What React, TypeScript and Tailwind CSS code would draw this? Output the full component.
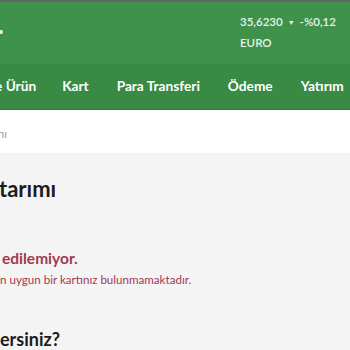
import React from 'react';

const navItems = [
    { label: 'e Ürün', left: 'ml-[-5px]' },
    { label: 'Kart', left: 'ml-[26px]' },
    { label: 'Para Transferi', left: 'ml-[28px]' },
    { label: 'Ödeme', left: 'ml-[28px]' },
    { label: 'Yatırım', left: 'ml-[28px]' },
];

export default function App() {
    return (
        <div className="w-[350px] h-[350px] overflow-hidden bg-[#f4f4f4]" style={{ fontFamily: 'Lato, "Liberation Sans", sans-serif' }}>
            {/* Top header */}
            <div className="h-[2px] bg-[#5f6b62]" />
            <div className="h-[62px] bg-[#3f924c] flex relative">
                <div className="absolute left-0 top-[28px] w-[3px] h-[4px] bg-white/90 rounded-r-sm" />
                <div className="ml-[240px] pt-[10px] text-[11.5px] leading-[20px] text-[#e6f3e6] font-semibold">
                    <div className="flex items-center whitespace-nowrap">
                        <span>35,6230</span>
                        <span className="ml-[5px] text-[7px]">▼</span>
                        <span className="ml-[5px]">-%0,12</span>
                    </div>
                    <div className="mt-[1px]">EURO</div>
                </div>
            </div>

            {/* Nav */}
            <div className="h-[46px] bg-[#388a44] border-b border-[#2f7a3a] flex items-center whitespace-nowrap text-white font-bold text-[13.7px]">
                {navItems.map((item) => (
                    <span key={item.label} className={item.left}>{item.label}</span>
                ))}
            </div>

            {/* Breadcrumb */}
            <div className="h-[43px] bg-white flex items-center pt-[6px] text-[11px] text-[#9a9a9a]">
                <span className="ml-[-2px]">nı</span>
            </div>

            {/* Content */}
            <div className="pt-[22px]">
                <h1 className="text-[22px] leading-[28px] font-bold text-[#1c1c1c] ml-[-1px]">tarımı</h1>
                <div className="mt-[44px] text-[15.5px] leading-[22px] font-bold text-[#a13a52] ml-[2px]">edilemiyor.</div>
                <div className="mt-[3px] text-[11.6px] leading-[16px] text-[#a13a52]">n uygun bir kartınız bulunmamaktadır.</div>
                <h2 className="mt-[38px] text-[18px] leading-[26px] font-bold text-[#1c1c1c]">ersiniz?</h2>
            </div>
        </div>
    );
}
